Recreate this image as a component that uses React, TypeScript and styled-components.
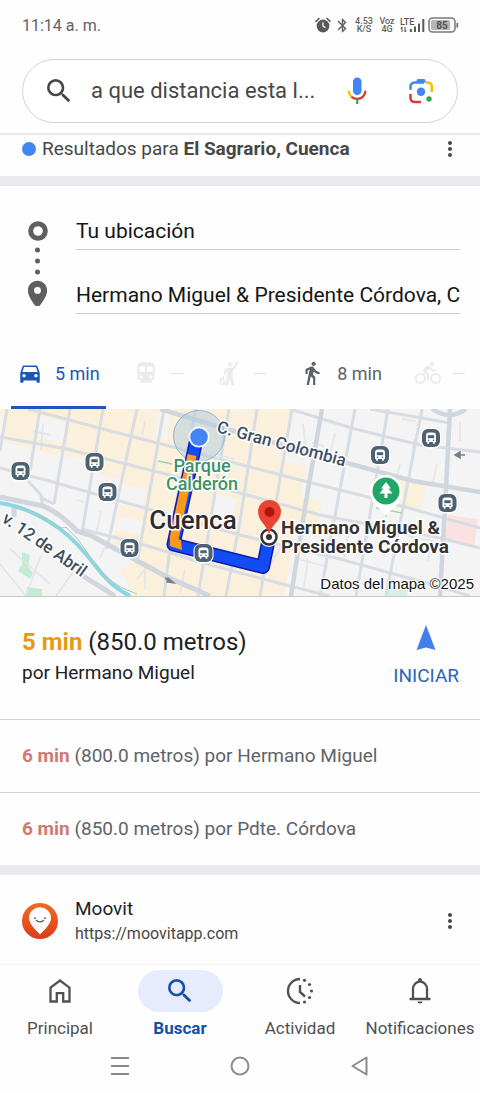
import React from "react";
import styled, { createGlobalStyle } from "styled-components";
import {
  MdBluetooth,
  MdDirectionsBike,
  MdDirectionsCar,
  MdDirectionsSubway,
  MdDirectionsWalk,
  MdMoreVert,
  MdPlace,
  MdSearch,
} from "react-icons/md";

const GlobalStyle = createGlobalStyle`
  *, *::before, *::after { box-sizing: border-box; }
  body { margin: 0; background: #fff; font-family: Roboto, "Noto Sans", sans-serif; color: #202124; }
  button, input { font: inherit; color: inherit; border: 0; background: none; padding: 0; margin: 0; outline: none; }
  button { cursor: pointer; }
  a { color: inherit; text-decoration: none; }
  svg { display: block; flex: none; }
`;

const Page = styled.div`
  display: flex;
  flex-direction: column;
  min-height: 100vh;
  background: #fefefe;
`;

const StatusBar = styled.div`
  display: flex;
  align-items: center;
  justify-content: space-between;
  height: 48px;
  padding: 2px 21px 0 22px;
  color: #626262;
  font-size: 16px;
`;

const StatusIcons = styled.div`
  display: flex;
  align-items: center;
  gap: 3px;
`;

const TinyStack = styled.div`
  display: flex;
  flex-direction: column;
  align-items: center;
  min-width: 20px;
  font-size: 9px;
  line-height: 8px;
  font-weight: 500;
`;

const Header = styled.header`
  padding: 11px 22px 10px;
  border-bottom: 2px solid #e9eaec;
`;

const SearchForm = styled.form`
  display: flex;
  align-items: center;
  height: 64px;
  padding: 0 20px;
  border: 1px solid #d3d4d6;
  border-radius: 32px;
  background: #fff;
`;

const SearchInput = styled.input`
  flex: 1;
  min-width: 0;
  margin: 0 16px;
  font-size: 22px;
  line-height: 28px;
  color: #474747;
`;

const IconButton = styled.button`
  display: flex;
  align-items: center;
  justify-content: center;
  width: 32px;
  height: 32px;
  flex: none;
  color: #474747;
`;

const SearchActions = styled.div`
  display: flex;
  gap: 32px;
`;

const LocationRow = styled.section`
  display: flex;
  align-items: center;
  height: 41px;
  padding: 0 14px 13px 22px;
  font-size: 19px;
  line-height: 24px;
  color: #474747;
`;

const LocationText = styled.p`
  flex: 1;
  margin: 0 0 0 6px;
  white-space: nowrap;
`;

const BlueDot = styled.span`
  width: 14px;
  height: 14px;
  border-radius: 50%;
  background: #4285f4;
`;

const Band = styled.div`
  height: 10px;
  background: #e8eaed;
`;

const Waypoints = styled.section`
  display: flex;
  gap: 26px;
  padding: 26px 20px 26px 26px;
`;

const Fields = styled.div`
  flex: 1;
  min-width: 0;
  display: flex;
  flex-direction: column;
  gap: 26px;
`;

const RouteInput = styled.input`
  width: 100%;
  height: 38px;
  border-bottom: 1px solid #c9cbce;
  font-size: 21px;
  color: #151515;
`;

const WaypointMarks = styled.div`
  display: flex;
  flex-direction: column;
  align-items: center;
  width: 24px;
  padding-top: 8px;
  color: #5f5f5f;
`;

const Modes = styled.div`
  display: flex;
  justify-content: space-between;
  padding: 0 9px 0 11px;
`;

const Mode = styled.button<{ $state: "active" | "idle" | "off" }>`
  display: flex;
  align-items: center;
  gap: 12px;
  height: 69px;
  padding: 0 6px;
  font-size: 18px;
  white-space: nowrap;
  color: ${(p) => (p.$state === "active" ? "#1b56b8" : p.$state === "idle" ? "#5f6368" : "#ebebeb")};
  border-bottom: 3px solid ${(p) => (p.$state === "active" ? "#1b56b8" : "transparent")};
`;

const Dash = styled.span`
  width: 12px;
  height: 1px;
  background: #dfdfdf;
`;

const MapView = styled.div`
  border-bottom: 1px solid #c4c7ca;
  svg { width: 100%; height: auto; }
`;

const MainRoute = styled.section`
  display: flex;
  justify-content: space-between;
  align-items: flex-start;
  padding: 28px 21px 31px 22px;
`;

const MainRouteTitle = styled.h2`
  margin: 0;
  font-size: 24px;
  line-height: 34px;
  font-weight: 400;
  b { color: #e69a12; }
`;

const MainRouteVia = styled.p`
  margin: 0;
  font-size: 19px;
  line-height: 28px;
`;

const StartButton = styled.button`
  display: flex;
  flex-direction: column;
  align-items: center;
  gap: 13px;
  font-size: 19px;
  line-height: 24px;
  color: #2b64b5;
`;

const AltRoute = styled.a`
  display: flex;
  align-items: center;
  height: 73px;
  padding: 0 22px 2px;
  border-top: 1px solid #d0d2d5;
  font-size: 19px;
  color: #5f6368;
  white-space: pre;
  b { color: #d17a75; }
`;

const Result = styled.section`
  display: flex;
  align-items: center;
  height: 89px;
  padding: 3px 14px 0 22px;
`;

const ResultText = styled.a`
  flex: 1;
  margin-left: 17px;
  display: flex;
  flex-direction: column;
`;

const SiteName = styled.span`
  font-size: 19px;
  line-height: 26px;
`;

const SiteUrl = styled.span`
  font-size: 16px;
  line-height: 24px;
  color: #474747;
`;

const BottomNav = styled.nav`
  display: grid;
  grid-template-columns: repeat(4, 1fr);
  padding-top: 5px;
  border-top: 1px solid #f5f5f6;
`;

const NavItem = styled.a<{ $active?: boolean }>`
  display: flex;
  flex-direction: column;
  align-items: center;
  gap: 5px;
  font-size: 17px;
  line-height: 22px;
  font-weight: ${(p) => (p.$active ? 700 : 400)};
  color: ${(p) => (p.$active ? "#1450a8" : "#4f5154")};
`;

const NavPill = styled.span<{ $active?: boolean }>`
  display: flex;
  align-items: center;
  justify-content: center;
  width: 85px;
  height: 42px;
  border-radius: 21px;
  background: ${(p) => (p.$active ? "#e6ecfd" : "transparent")};
`;

const SystemBar = styled.div`
  display: grid;
  grid-template-columns: repeat(3, 1fr);
  justify-items: center;
  align-items: center;
  padding: 11px 60px 10px;
  color: #8b8b8b;
`;

const AlarmIcon = () => (
  <svg width="16" height="16" viewBox="0 0 16 16" aria-hidden="true">
    <circle cx="8" cy="9" r="6.4" fill="#595959" />
    <path d="M1 4.3 4 1.5M15 4.3 12 1.5" stroke="#595959" strokeWidth="1.6" strokeLinecap="round" />
    <path d="M8 5.5V9l2.4 1.6" stroke="#fff" strokeWidth="1.3" fill="none" />
  </svg>
);

const SignalIcon = () => (
  <svg width="25" height="16" viewBox="0 0 25 16" role="img" aria-label="LTE">
    <text x="0" y="7.5" fontSize="9" fontWeight="500" fill="#595959">LTE</text>
    <path d="M2 10v5M.7 11.5 2 10M5 10v5M6.3 13.5 5 15" stroke="#595959" strokeWidth="1.1" fill="none" />
    <path d="M10.9 12v3M15 9.500v5.500M19 6.500v8.500M23.300 2v13" stroke="#595959" strokeWidth="2" />
  </svg>
);

const BatteryIcon = () => (
  <svg width="31" height="16" viewBox="0 0 31 16" role="img" aria-label="85">
    <rect x="1" y="1" width="26" height="14" rx="3.500" fill="#fff" stroke="#777" strokeWidth="1.500" />
    <rect x="3" y="3" width="19" height="10" rx="1.500" fill="#b5b5b5" />
    <path d="M29.300 6v4.500" stroke="#666" strokeWidth="1.600" />
    <text x="14" y="11.500" fontSize="10" fontWeight="700" textAnchor="middle" fill="#505050">85</text>
  </svg>
);

const MicIcon = () => (
  <svg width="24" height="28" viewBox="0 0 24 28" aria-hidden="true">
    <rect x="8" y="0.500" width="8.500" height="17.500" rx="4.200" fill="#4285f4" />
    <path d="M3.800 13.800c0 2.700 1.200 4.900 3 6.300" stroke="#fbbc04" strokeWidth="2.300" fill="none" />
    <path d="M6.500 19.900a9 9 0 0 0 5.700 2c4.700 0 8.200-3.500 8.200-8.100" stroke="#d93b30" strokeWidth="2.300" fill="none" />
    <path d="M12.200 22.700v4.300" stroke="#34a853" strokeWidth="2.300" />
  </svg>
);

const LensIcon = () => (
  <svg width="26" height="26" viewBox="0 0 26 26" fill="none" aria-hidden="true">
    <path d="M2.500 11.800V8.500a4 4 0 0 1 4-4H16" stroke="#4285f4" strokeWidth="2.600" />
    <path d="M7.500 4.500 9.500 1h7l2 3.500z" fill="#4285f4" />
    <path d="M17.500 4.500h2.300a4 4 0 0 1 4 4v5.500" stroke="#fbbc04" strokeWidth="2.600" />
    <path d="M2.500 16v4a4 4 0 0 0 4 4H13" stroke="#d93b30" strokeWidth="2.600" />
    <circle cx="13" cy="13.800" r="4.200" fill="#4285f4" />
    <circle cx="21" cy="21" r="2.700" fill="#34a853" />
  </svg>
);

const HailIcon = () => (
  <svg width="26" height="26" viewBox="0 0 24 24" fill="none" stroke="currentColor" aria-hidden="true">
    <circle cx="13" cy="4" r="2" fill="currentColor" stroke="none" />
    <path d="M19.500 1.500c-.5 4-2 6-4.500 6.500h-3.500c-2.500 1-3.500 3-3.500 5.500" strokeWidth="1.900" />
    <path d="M11 8h4.500l-.5 7 1.500 8h-2l-2-6-2 6h-1.800l2-8z" fill="currentColor" strokeWidth="0.500" />
    <path d="M6.500 15v2.500H4.500V23M7.500 18v5" strokeWidth="1.500" />
  </svg>
);

const NavigationArrow = () => (
  <svg width="22" height="26" viewBox="0 0 22 26" aria-hidden="true">
    <path d="M11 0 20.500 25 11 22.500 1.500 25z" fill="#4080ee" />
  </svg>
);

const MoovitLogo = () => (
  <svg width="36" height="36" viewBox="0 0 36 36" role="img" aria-label="Moovit">
    <defs>
      <linearGradient id="moovit" x1="0" y1="0" x2="0" y2="1">
        <stop offset="0" stopColor="#f26a21" />
        <stop offset="1" stopColor="#dd3b1c" />
      </linearGradient>
    </defs>
    <circle cx="18" cy="18" r="18" fill="url(#moovit)" />
    <path d="M18 31.500C14 27 7 21.500 7 14.800a11 10.500 0 0 1 22 0c0 6.700-7 12.200-11 16.700z" fill="#fff" />
    <path d="M14.500 17.300c1.600 2 5.400 2 7 0M12.500 15.200h1M22.500 15.200h1" stroke="#4a4a4a" strokeWidth="1.200" fill="none" strokeLinecap="round" />
  </svg>
);

const HomeIcon = () => (
  <svg width="24" height="26" viewBox="0 0 24 26" fill="none" stroke="currentColor" strokeWidth="2.300" aria-hidden="true">
    <path d="M2.500 9.700 12 2.500l9.500 7.200v13.800h-6.300v-8.300H8.800v8.300H2.500z" />
  </svg>
);

const ActivityIcon = () => (
  <svg width="28" height="28" viewBox="0 0 28 28" fill="none" stroke="currentColor" strokeWidth="2.400" aria-hidden="true">
    <path d="M14 2a12 12 0 1 0 0 24M14 8v7l5 4.500" />
    <g fill="currentColor" stroke="none">
      <circle cx="18.500" cy="3.300" r="1.600" />
      <circle cx="23.500" cy="7.500" r="1.600" />
      <circle cx="25.500" cy="14" r="1.600" />
      <circle cx="23.500" cy="20.500" r="1.600" />
      <circle cx="18.500" cy="25" r="1.600" />
    </g>
  </svg>
);

const BellIcon = () => (
  <svg width="24" height="28" viewBox="0 0 24 28" fill="none" stroke="currentColor" strokeWidth="2.300" aria-hidden="true">
    <path d="M1.500 22h21M5 22V12a7 7.500 0 0 1 14 0v10" />
    <circle cx="12" cy="3" r="2" fill="currentColor" stroke="none" />
    <path d="M9.500 24.500h5a2.500 2 0 0 1-5 0z" fill="currentColor" stroke="none" />
  </svg>
);

const stops: [number, number][] = [
  [20.500, 62], [94.500, 53], [107.500, 83], [129.500, 139], [203.500, 144], [380, 46], [431, 29], [447.500, 94],
];

const BusStop = ({ x, y }: { x: number; y: number }) => (
  <g transform={`translate(${x} ${y})`}>
    <rect x="-10" y="-9.500" width="20" height="20" rx="7" fill="#fff" />
    <rect x="-9" y="-9" width="18" height="18" rx="6" fill="#4c6272" />
    <path d="M-5-2.500c0-2 1-3 3-3h4c2 0 3 1 3 3V4H3.800v1.800H2V4h-4v1.800h-1.800V4H-5z" fill="#fff" />
    <path d="M-3.200-2.800h6.400v3h-6.400z" fill="#4c6272" />
    <circle cx="-2.500" cy="2.200" r=".8" fill="#4c6272" />
    <circle cx="2.500" cy="2.200" r=".8" fill="#4c6272" />
  </g>
);

const RouteMap = () => (
  <svg viewBox="0 0 480 187" role="img" aria-label="Cuenca">
    <rect width="480" height="187" fill="#f5f4f5" />
    <g fill="#fbf0db">
      <path d="M0 0h292l-12 50 26 8-22 129H134l-14-26 22-12-30-13 12-65-33-8-2-11-46-9-36-9z" />
      <path d="M382 68l45 8-6 26-44-6zM300 88l22 5-4 22-22-4z" />
    </g>
    <g fill="#f5f4f5">
      <path d="M37 6l31 8-4 20-32-7zM171 0h-12l-6 27 13 4zM123 75l23 5-4 20-23-5zM119 107l24 6-3 13-23-5zM214 84l23 6-5 26-23-6z" />
    </g>
    <g fill="#c3ecd0">
      <path d="M22 143l8 3-2 12 5 6-3 6-12-8 4-6zM27 178l15 2v7H25z" />
      <path d="M389 178h20l-2 9h-20z" opacity=".6" />
    </g>
    <path d="M448 106l30 4-4 28-30-7z" fill="#fbe2e2" />

    <g fill="none" stroke="#e2e6ea" strokeWidth="1.800">
      <path d="M43 15l-2 26M33 22l18 4M145 12l-3 14M101 102l-5 24M110 127l-10 22M77 91l7 2M41 146l-15 40M10 140l40 35M0 155l26 32M75 160l-19 27M138 127l-4 20M137 170l8-10v20M225 15l-3 20M215 45l20 5M185 160l-5 25" />
      <path d="M303 15l3 25M335 24l-5 20M312 34l12 3M402 10l14 2M414 30l-3 30M437 55l-4 18M460 12v20M408 127l24 5-4 20M298 150l30 8M308 150l-4 28M350 118l-6 30M286 130l-25 40M400 55l-4 18" />
    </g>
    <g fill="none" stroke="#d7dde3" strokeWidth="3">
      <path d="M7 0 0 42M40 0 30 62M70 0 54 95M103 0 82 124M137 0 107 140M164 0 137 155M196 0 175 100 164 187M229 0 198 187" />
      <path d="M257 0 240 112 226 187M292 0 260 187M355 0 320 187M388 0 356 187M422 0 386 187" />
      <path d="M28 0 103 20 200 45 300 71 380 91 480 119M0 28 67 40 240 84 320 106 440 129 480 139" />
      <path d="M0 59 53 73 166 105 240 126 340 150 430 175 470 187M82 120 148 137 203 154 290 177 330 187" />
      <path d="M290 0 355 20 420 36 480 43M370 0 450 14M28 72 41 86 43 98M40 88 54 95" />
    </g>
    <path d="M160 0 240 24 347 54 413 72 480 83" fill="none" stroke="#cfd6dd" strokeWidth="4.500" />
    <path d="M322 0 308 80 291 187M450 0 447 60 440 187M432 0q18 12 34 0" fill="none" stroke="#cfd6dd" strokeWidth="4.500" />
    <path d="M0 88 43 97Q60 104 77 122L92 127 165 167 210 187M14 96v12M80 165 115 187" fill="none" stroke="#d0d5de" strokeWidth="5" />
    <path d="M0 94Q32 99 60 120 76 132 95 156 110 177 130 187" fill="none" stroke="#8dd5e2" strokeWidth="4" />
    <path d="M17 97Q36 102 49 114 59 121 66 118 79 130 87 143 104 175 137 185" fill="none" stroke="#a9cdb2" strokeWidth="1" />
    <g stroke="#76808c" strokeWidth="1.500" fill="#76808c">
      <path d="M165 169l5 3M455 46h10" />
      <path d="M168 169l6 5-7-1zM460 43l-5 3 5 3z" />
    </g>
    <path d="M376 99l26 5M386 104v4M158 52l14 3" stroke="#9bd6ab" strokeWidth="1.500" fill="none" />

    <circle cx="199" cy="27" r="25.500" fill="#a9c8e0" fillOpacity=".45" stroke="#8fb7cf" strokeWidth="1" />
    <g fill="none" strokeLinejoin="round">
      <path d="M197 28 173.500 135.500 263 158 269 129" stroke="#1418a8" strokeWidth="14" />
      <path d="M197 28 173.500 135.500 263 158 269 129" stroke="#124cf5" strokeWidth="11" />
      <path d="M192 46 174 130" stroke="#fb9a1c" strokeWidth="9" />
      <path d="M170 128 181 131 182 141 170 137z" fill="#fb9a1c" />
    </g>
    <circle cx="199" cy="28" r="10.500" fill="#fff" />
    <circle cx="199" cy="28" r="8.800" fill="#4285f4" />

    {stops.map(([x, y]) => <BusStop key={`${x}-${y}`} x={x} y={y} />)}

    <g>
      <path d="M386 107c-3-7-16-10-16-25a16 16 0 0 1 32 0c0 15-13 18-16 25z" fill="#fff" />
      <circle cx="386" cy="82" r="13.500" fill="#23a568" />
      <path d="M386 73l5 6.500h-2.500l4 5h-5V89h-3v-4.500h-5l4-5H381z" fill="#fff" />
    </g>
    <g>
      <circle cx="269" cy="128" r="10" fill="#fff" />
      <circle cx="269" cy="128" r="7.500" fill="#fff" stroke="#333" strokeWidth="2.500" />
      <circle cx="269" cy="128" r="3" fill="#333" />
      <path d="M269 126c-2-11-11-13-11-23.500a11.500 11.500 0 0 1 23 0c0 10.500-10 12.500-12 23.500z" fill="#e94335" />
      <circle cx="269.500" cy="103" r="5" fill="#b3140f" />
    </g>

    <g stroke="#fff" strokeWidth="3" strokeLinejoin="round" paintOrder="stroke" fontWeight="500">
      <text transform="translate(216 23) rotate(15)" fontSize="17" fill="#3e4f5e">C. Gran Colombia</text>
      <text transform="translate(1 112) rotate(35)" fontSize="17" fill="#3e4f5e">v. 12 de Abril</text>
      <text x="202" y="63" fontSize="18" textAnchor="middle" fill="#3b9468">Parque</text>
      <text x="202" y="81" fontSize="18" textAnchor="middle" fill="#3b9468">Calderón</text>
      <text x="193" y="120" fontSize="26" textAnchor="middle" fill="#2c2c2e">Cuenca</text>
      <text x="281" y="125" fontSize="19" fontWeight="700" fill="#333">Hermano Miguel &amp;</text>
      <text x="281" y="144" fontSize="19" fontWeight="700" fill="#333">Presidente Córdova</text>
      <text x="474" y="180" fontSize="15" fontWeight="400" textAnchor="end" fill="#111" strokeWidth="2" fontFamily="Liberation Sans, Arial, sans-serif">Datos del mapa ©2025</text>
    </g>
  </svg>
);

export default function App() {
  return (
    <Page>
      <GlobalStyle />
      <StatusBar>
        <span>11:14 a. m.</span>
        <StatusIcons>
          <AlarmIcon />
          <MdBluetooth size={17} />
          <TinyStack><span>4.53</span><span>K/S</span></TinyStack>
          <TinyStack><span>Voz</span><span>4G</span></TinyStack>
          <SignalIcon />
          <BatteryIcon />
        </StatusIcons>
      </StatusBar>

      <Header>
        <SearchForm onSubmit={(e) => e.preventDefault()}>
          <IconButton type="submit" aria-label="Buscar"><MdSearch size={32} /></IconButton>
          <SearchInput aria-label="Búsqueda" defaultValue="a que distancia esta l..." />
          <SearchActions>
            <IconButton type="button" aria-label="Búsqueda por voz"><MicIcon /></IconButton>
            <IconButton type="button" aria-label="Lens"><LensIcon /></IconButton>
          </SearchActions>
        </SearchForm>
      </Header>

      <main>
        <LocationRow>
          <BlueDot />
          <LocationText>Resultados para <b>El Sagrario, Cuenca</b></LocationText>
          <IconButton aria-label="Más opciones"><MdMoreVert size={24} /></IconButton>
        </LocationRow>
        <Band />

        <Waypoints>
          <WaypointMarks>
            <svg width="24" height="86" viewBox="0 0 24 86" aria-hidden="true">
              <circle cx="12" cy="11" r="7.300" fill="none" stroke="currentColor" strokeWidth="5" />
              <circle cx="11.500" cy="30" r="2.500" fill="currentColor" />
              <circle cx="11.500" cy="41" r="2.500" fill="currentColor" />
              <circle cx="11.500" cy="52" r="2.500" fill="currentColor" />
              <MdPlace x="-5" y="58" size={33} />
            </svg>
          </WaypointMarks>
          <Fields>
            <RouteInput aria-label="Origen" defaultValue="Tu ubicación" />
            <RouteInput aria-label="Destino" defaultValue="Hermano Miguel & Presidente Córdova, Cuenca" />
          </Fields>
        </Waypoints>

        <Modes role="tablist">
          <Mode role="tab" aria-selected="true" aria-label="En auto" $state="active"><MdDirectionsCar size={26} />5 min</Mode>
          <Mode role="tab" aria-label="Transporte público" $state="off"><MdDirectionsSubway size={26} /><Dash /></Mode>
          <Mode role="tab" aria-label="Taxi" $state="off"><HailIcon /><Dash /></Mode>
          <Mode role="tab" aria-label="A pie" $state="idle"><MdDirectionsWalk size={26} />8 min</Mode>
          <Mode role="tab" aria-label="En bicicleta" $state="off"><MdDirectionsBike size={26} /><Dash /></Mode>
        </Modes>

        <MapView><RouteMap /></MapView>

        <MainRoute>
          <div>
            <MainRouteTitle><b>5 min</b> (850.0 metros)</MainRouteTitle>
            <MainRouteVia>por Hermano Miguel</MainRouteVia>
          </div>
          <StartButton><NavigationArrow />INICIAR</StartButton>
        </MainRoute>
        <AltRoute href="#ruta-2"><b>6 min</b> (800.0 metros) por Hermano Miguel</AltRoute>
        <AltRoute href="#ruta-3"><b>6 min</b> (850.0 metros) por Pdte. Córdova</AltRoute>
        <Band />

        <Result>
          <MoovitLogo />
          <ResultText href="#moovit">
            <SiteName>Moovit</SiteName>
            <SiteUrl>https://moovitapp.com</SiteUrl>
          </ResultText>
          <IconButton aria-label="Más opciones"><MdMoreVert size={24} /></IconButton>
        </Result>
      </main>

      <BottomNav>
        <NavItem href="#principal"><NavPill><HomeIcon /></NavPill>Principal</NavItem>
        <NavItem href="#buscar" $active aria-current="page"><NavPill $active><MdSearch size={32} /></NavPill>Buscar</NavItem>
        <NavItem href="#actividad"><NavPill><ActivityIcon /></NavPill>Actividad</NavItem>
        <NavItem href="#notificaciones"><NavPill><BellIcon /></NavPill>Notificaciones</NavItem>
      </BottomNav>

      <SystemBar>
        <IconButton aria-label="Recientes">
          <svg width="20" height="20" viewBox="0 0 20 20" stroke="#8b8b8b" strokeWidth="2"><path d="M1 2h18M1 10h18M1 18h18" /></svg>
        </IconButton>
        <IconButton aria-label="Inicio">
          <svg width="20" height="20" viewBox="0 0 20 20" fill="none" stroke="#8b8b8b" strokeWidth="2"><circle cx="10" cy="10" r="8.500" /></svg>
        </IconButton>
        <IconButton aria-label="Atrás">
          <svg width="20" height="20" viewBox="0 0 20 20" fill="none" stroke="#8b8b8b" strokeWidth="2" strokeLinejoin="round"><path d="M16.500 1.500v17L2.500 10z" /></svg>
        </IconButton>
      </SystemBar>
    </Page>
  );
}
